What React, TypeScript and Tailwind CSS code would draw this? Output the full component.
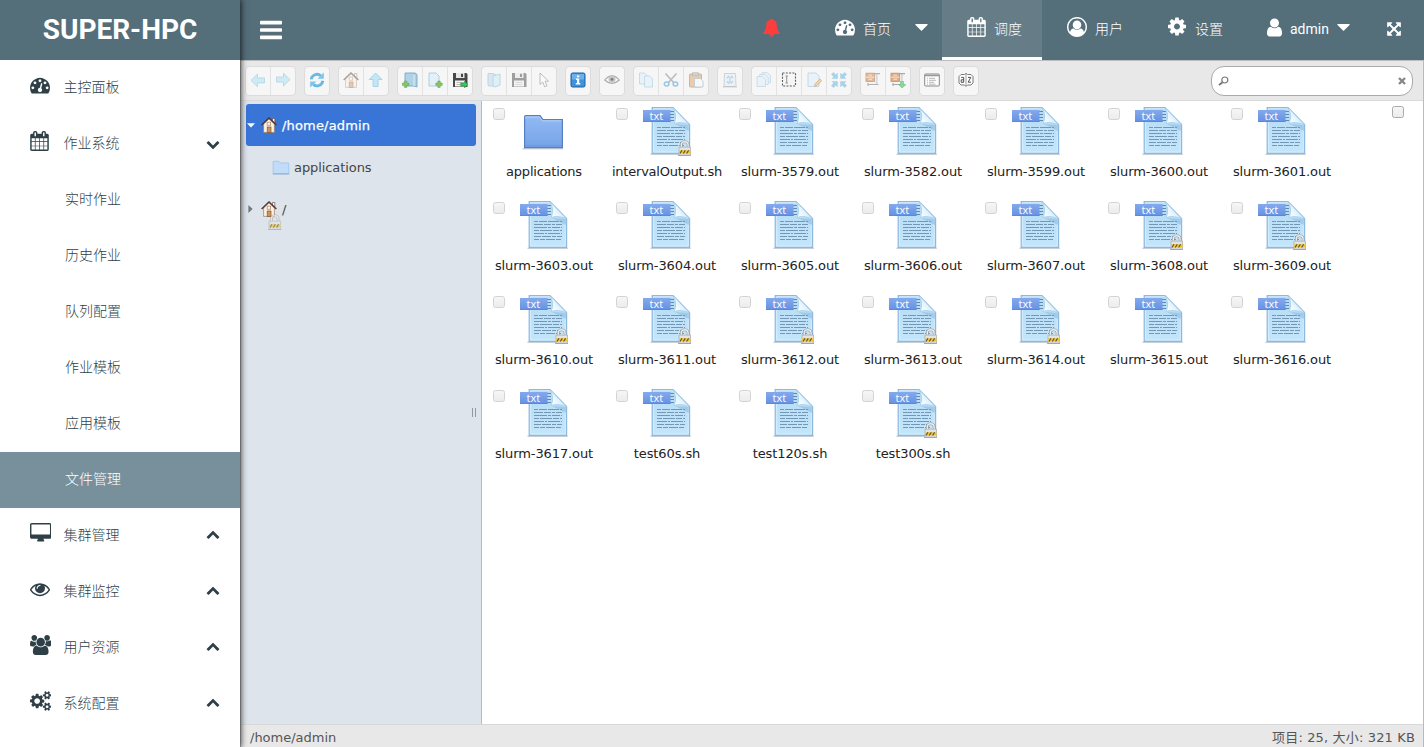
import React from "react";

const P = {
  dashboard:
    "M384 1152q0-53-37.5-90.5t-90.5-37.5-90.5 37.5-37.5 90.5 37.5 90.5 90.5 37.5 90.5-37.5 37.5-90.5zm192-448q0-53-37.5-90.5t-90.5-37.5-90.5 37.5-37.5 90.5 37.5 90.5 90.5 37.5 90.5-37.5 37.5-90.5zm428 481l101-382q6-26-7.5-48.5t-38.5-29.5-48 6.5-30 39.5l-101 382q-60 5-107 43.5t-63 98.5q-20 77 20 146t117 89 146-20 89-117q16-60-6-117t-72-91zm660-33q0-53-37.5-90.5t-90.5-37.5-90.5 37.5-37.5 90.5 37.5 90.5 90.5 37.5 90.5-37.5 37.5-90.5zm-640-640q0-53-37.5-90.5t-90.5-37.5-90.5 37.5-37.5 90.5 37.5 90.5 90.5 37.5 90.5-37.5 37.5-90.5zm448 192q0-53-37.5-90.5t-90.5-37.5-90.5 37.5-37.5 90.5 37.5 90.5 90.5 37.5 90.5-37.5 37.5-90.5zm320 448q0 261-141 483-19 29-54 29h-1402q-35 0-54-29-141-221-141-483 0-182 71-348t191-286 286-191 348-71 348 71 286 191 191 286 71 348z",
  bars: "M1664 1344v128q0 26-19 45t-45 19h-1408q-26 0-45-19t-19-45v-128q0-26 19-45t45-19h1408q26 0 45 19t19 45zm0-512v128q0 26-19 45t-45 19h-1408q-26 0-45-19t-19-45v-128q0-26 19-45t45-19h1408q26 0 45 19t19 45zm0-512v128q0 26-19 45t-45 19h-1408q-26 0-45-19t-19-45v-128q0-26 19-45t45-19h1408q26 0 45 19t19 45z",
  calendar:
    "M192 1664h288v-288h-288v288zm352 0h320v-288h-320v288zm-352-352h288v-320h-288v320zm352 0h320v-320h-320v320zm-352-384h288v-288h-288v288zm736 736h320v-288h-320v288zm-384-736h320v-288h-320v288zm768 736h288v-288h-288v288zm-384-352h320v-320h-320v320zm-352-864v-288q0-13-9.5-22.5t-22.5-9.5h-64q-13 0-22.5 9.5t-9.5 22.5v288q0 13 9.5 22.5t22.5 9.5h64q13 0 22.5-9.5t9.5-22.5zm736 864h288v-320h-288v320zm-384-384h320v-288h-320v288zm384 0h288v-288h-288v288zm32-480v-288q0-13-9.5-22.5t-22.5-9.5h-64q-13 0-22.5 9.5t-9.5 22.5v288q0 13 9.5 22.5t22.5 9.5h64q13 0 22.5-9.5t9.5-22.5zm384-64v1280q0 52-38 90t-90 38h-1408q-52 0-90-38t-38-90v-1280q0-52 38-90t90-38h128v-96q0-66 47-113t113-47h64q66 0 113 47t47 113v96h384v-96q0-66 47-113t113-47h64q66 0 113 47t47 113v96h128q52 0 90 38t38 90z",
  desktop:
    "M1792 992v-832q0-13-9.5-22.5t-22.5-9.5h-1600q-13 0-22.5 9.5t-9.5 22.5v832q0 13 9.5 22.5t22.5 9.5h1600q13 0 22.5-9.5t9.5-22.5zm128-832v1088q0 66-47 113t-113 47h-544q0 37 16 77.5t32 71 16 43.5q0 26-19 45t-45 19h-512q-26 0-45-19t-19-45q0-14 16-44t32-70 16-78h-544q-66 0-113-47t-47-113v-1088q0-66 47-113t113-47h1600q66 0 113 47t47 113z",
  eye: "M1664 960q-152-236-381-353 61 104 61 225 0 185-131.5 316.5t-316.5 131.5-316.5-131.5-131.5-316.5q0-121 61-225-229 117-381 353 133 205 333.5 326.5t434.5 121.5 434.5-121.5 333.5-326.5zm-720-384q0-20-14-34t-34-14q-125 0-214.5 89.5t-89.5 214.5q0 20 14 34t34 14 34-14 14-34q0-86 61-147t147-61q20 0 34-14t14-34zm848 384q0 34-20 69-140 230-376.5 368.5t-499.5 138.5-499.5-139-376.5-368q-20-35-20-69t20-69q140-229 376.5-368t499.5-139 499.5 139 376.5 368q20 35 20 69z",
  users:
    "M593 896q-162 5-265 128h-134q-82 0-138-40.5t-56-118.5q0-353 124-353 6 0 43.5 21t97.5 42.5 119 21.5q67 0 133-23-5 37-5 66 0 159 93 293zm1071 637q0 120-73 189.5t-194 69.5h-874q-121 0-194-69.5t-73-189.5q0-53 3.5-103.5t14-109 26.5-108.5 43-97.5 62-81 85.5-53.5 111.5-20q10 0 43 21.5t73 48 107 48 135 21.5 135-21.5 107-48 73-48 43-21.5q61 0 111.5 20t85.5 53.5 62 81 43 97.5 26.5 108.5 14 109 3.5 103.5zm-1024-1277q0 106-75 181t-181 75-181-75-75-181 75-181 181-75 181 75 75 181zm704 384q0 159-112.5 271.5t-271.5 112.5-271.5-112.5-112.5-271.5 112.5-271.5 271.5-112.5 271.5 112.5 112.5 271.5zm576 225q0 78-56 118.5t-138 40.5h-134q-103-123-265-128 93-134 93-293 0-29-5-66 66 23 133 23 59 0 119-21.5t97.5-42.5 43.5-21q124 0 124 353zm-128-609q0 106-75 181t-181 75-181-75-75-181 75-181 181-75 181 75 75 181z",
  cogs: "M896 896q0-106-75-181t-181-75-181 75-75 181 75 181 181 75 181-75 75-181zm768 512q0-52-38-90t-90-38-90 38-38 90q0 53 37.5 90.5t90.5 37.5 90.5-37.5 37.5-90.5zm0-1024q0-52-38-90t-90-38-90 38-38 90q0 53 37.5 90.5t90.5 37.5 90.5-37.5 37.5-90.5zm-384 421v185q0 10-7 19.5t-16 10.5l-155 24q-11 35-32 76 34 48 90 115 7 10 7 20 0 12-7 19-23 30-82.5 89.5t-78.5 59.5q-11 0-21-7l-115-90q-37 19-77 31-11 108-23 155-7 24-30 24h-186q-11 0-20-7.5t-10-17.5l-23-153q-34-10-75-31l-118 89q-7 7-20 7-11 0-21-8-144-133-144-160 0-9 7-19 10-14 41-53t47-61q-23-44-35-82l-152-24q-10-1-17-9.5t-7-19.5v-185q0-10 7-19.5t16-10.5l155-24q11-35 32-76-34-48-90-115-7-11-7-20 0-12 7-20 22-30 82-89t79-59q11 0 21 7l115 90q34-18 77-32 11-108 23-154 7-24 30-24h186q11 0 20 7.5t10 17.5l23 153q34 10 75 31l118-89q8-7 20-7 11 0 21 8 144 133 144 160 0 9-7 19-12 16-42 54t-45 60q23 48 34 82l152 23q10 2 17 10.5t7 19.5zm640 533v140q0 16-149 31-12 27-30 52 51 113 51 138 0 4-4 7-122 71-124 71-8 0-46-47t-52-68q-20 2-30 2t-30-2q-14 21-52 68t-46 47q-2 0-124-71-4-3-4-7 0-25 51-138-18-25-30-52-149-15-149-31v-140q0-16 149-31 13-29 30-52-51-113-51-138 0-4 4-7 4-2 35-20t59-34 30-16q8 0 46 46.5t52 67.5q20-2 30-2t30 2q51-71 92-112l6-2q4 0 124 70 4 3 4 7 0 25-51 138 17 23 30 52 149 15 149 31zm0-1024v140q0 16-149 31-12 27-30 52 51 113 51 138 0 4-4 7-122 71-124 71-8 0-46-47t-52-68q-20 2-30 2t-30-2q-14 21-52 68t-46 47q-2 0-124-71-4-3-4-7 0-25 51-138-18-25-30-52-149-15-149-31v-140q0-16 149-31 13-29 30-52-51-113-51-138 0-4 4-7 4-2 35-20t59-34 30-16q8 0 46 46.5t52 67.5q20-2 30-2t30 2q51-71 92-112l6-2q4 0 124 70 4 3 4 7 0 25-51 138 17 23 30 52 149 15 149 31z",
  bell: "M912 1696q0-16-16-16-59 0-101.5-42.5t-42.5-101.5q0-16-16-16t-16 16q0 73 51.5 124.5t124.5 51.5q16 0 16-16zm816-288q0 52-38 90t-90 38h-448q0 106-75 181t-181 75-181-75-75-181h-448q-52 0-90-38t-38-90q50-42 91-88t85-119.5 74.5-158.5 50-206 19.5-260q0-152 117-282.5t307-158.5q-8-19-8-39 0-40 28-68t68-28 68 28 28 68q0 20-8 39 190 28 307 158.5t117 282.5q0 139 19.5 260t50 206 74.5 158.5 85 119.5 91 88z",
  cog: "M1152 896q0-106-75-181t-181-75-181 75-75 181 75 181 181 75 181-75 75-181zm512-109v222q0 12-8 23t-20 13l-185 28q-19 54-39 91 35 50 107 138 10 12 10 25t-9 23q-27 37-99 108t-94 71q-12 0-26-9l-138-108q-44 23-91 38-16 136-29 186-7 28-36 28h-222q-14 0-24.5-8.5t-11.5-21.5l-28-184q-49-16-90-37l-141 107q-10 9-25 9-14 0-25-11-126-114-165-168-7-10-7-23 0-12 8-23 15-21 51-66.5t54-70.5q-27-50-41-99l-183-27q-13-2-21-12.5t-8-23.5v-222q0-12 8-23t19-13l186-28q14-46 39-92-40-57-107-138-10-12-10-24 0-10 9-23 26-36 98.5-107.5t94.5-71.5q13 0 26 10l138 107q44-23 91-38 16-136 29-186 7-28 36-28h222q14 0 24.5 8.5t11.5 21.5l28 184q49 16 90 37l142-107q9-9 24-9 13 0 25 10 129 119 165 170 7 8 7 22 0 12-8 23-15 21-51 66.5t-54 70.5q26 50 41 98l183 28q13 2 21 12.5t8 23.5z",
  user: "M1536 1399q0 109-62.5 187t-150.5 78h-854q-88 0-150.5-78t-62.5-187q0-85 8.5-160.5t31.5-152 58.5-131 94-89 134.5-34.5q131 128 313 128t313-128q76 0 134.5 34.5t94 89 58.5 131 31.5 152 8.5 160.5zm-256-887q0 159-112.5 271.5t-271.5 112.5-271.5-112.5-112.5-271.5 112.5-271.5 271.5-112.5 271.5 112.5 112.5 271.5z",
  userCircle:
    "M896 0q182 0 348 71t286 191 191 286 71 348q0 181-70.5 347t-190.5 286-286 191.5-349 71.5-349-71-285.5-191.5-190.5-286-71-347.5 71-348 191-286 286-191 348-71zm619 1351q149-205 149-455 0-156-61-298t-164-245-245-164-298-61-298 61-245 164-164 245-61 298q0 250 149 455 66-327 306-327 131 128 313 128t313-128q240 0 306 327zm-235-647q0-159-112.5-271.5t-271.5-112.5-271.5 112.5-112.5 271.5 112.5 271.5 271.5 112.5 271.5-112.5 112.5-271.5z",
  expand:
    "M1411 541l-355 355 355 355 144-144q29-31 70-14 39 17 39 59v448q0 26-19 45t-45 19h-448q-42 0-59-40-17-39 14-69l144-144-355-355-355 355 144 144q31 30 14 69-17 40-59 40h-448q-26 0-45-19t-19-45v-448q0-42 40-59 39-17 69 14l144 144 355-355-355-355-144 144q-19 19-45 19-12 0-24-5-40-17-40-59v-448q0-26 19-45t45-19h448q42 0 59 40 17 39-14 69l-144 144 355 355 355-355-144-144q-31-30-14-69 17-40 59-40h448q26 0 45 19t19 45v448q0 42-39 59-13 5-25 5-26 0-45-19z",
  down: "M1683 808l-742 741q-19 19-45 19t-45-19l-742-741q-19-19-19-45.5t19-45.5l166-165q19-19 45-19t45 19l531 531 531-531q19-19 45-19t45 19l166 165q19 19 19 45.5t-19 45.5z",
  up: "M1683 1331l-166 165q-19 19-45 19t-45-19l-531-531-531 531q-19 19-45 19t-45-19l-166-165q-19-19-19-45.5t19-45.5l742-741q19-19 45-19t45 19l742 741q19 19 19 45.5t-19 45.5z",
};

function Glyph({ d, box = "0 0 1792 1792", className = "" }: { d: string; box?: string; className?: string }) {
  return (
    <svg viewBox={box} className={`shrink-0 fill-current ${className}`}>
      <path d={d} />
    </svg>
  );
}

const Caret = ({ className = "" }: { className?: string }) => (
  <svg viewBox="0 0 13 7" className={`h-[7px] w-[13px] shrink-0 fill-white ${className}`}>
    <path d="M0.6 0H12.4Q13 .5 12.5 1L7 6.6Q6.5 7 6 6.6L.5 1Q0 .5 .6 0Z" />
  </svg>
);

/* ---------- sidebar ---------- */

function MenuRow({ label, d, box, size, chevron }: { label: string; d: string; box?: string; size: string; chevron?: "up" | "down" }) {
  return (
    <div className="flex h-14 items-center pl-[30px] pr-[20px]">
      <div className="flex w-[33.5px] shrink-0">
        <Glyph d={d} box={box} className={`-mt-[7px] ${size}`} />
      </div>
      <span className="-mt-[3px] grow">{label}</span>
      {chevron === "down" && <Glyph d={P.down} className="size-[14px]" />}
      {chevron === "up" && <Glyph d={P.up} className="-mt-[5px] size-[14px]" />}
    </div>
  );
}

const SUBS = ["实时作业", "历史作业", "队列配置", "作业模板", "应用模板", "文件管理"];

function Sidebar() {
  return (
    <aside className="relative z-10 flex w-[240px] shrink-0 flex-col bg-white text-[14px] font-light text-[#2f3f47] shadow-[0_0_6px_1px_rgba(0,0,0,0.75)]">
      <div className="flex h-[60px] shrink-0 items-center justify-center bg-[#546e7a] font-[Roboto] text-[28px] font-bold text-white">
        SUPER-HPC
      </div>
      <MenuRow label="主控面板" d={P.dashboard} size="size-[20px]" />
      <MenuRow label="作业系统" d={P.calendar} box="64 0 1664 1792" size="h-[20px] w-[19px]" chevron="down" />
      {SUBS.map((s) => (
        <div
          key={s}
          className={`flex h-14 items-center pl-[65px] ${s === "文件管理" ? "bg-[#78909c] text-white" : ""}`}
        >
          <span className="-mt-[3px]">{s}</span>
        </div>
      ))}
      <MenuRow label="集群管理" d={P.desktop} box="0 0 1920 1792" size="h-[20px] w-[21.4px]" chevron="up" />
      <MenuRow label="集群监控" d={P.eye} size="size-[20px]" chevron="up" />
      <MenuRow label="用户资源" d={P.users} box="0 0 1920 1792" size="h-[20px] w-[21.4px]" chevron="up" />
      <MenuRow label="系统配置" d={P.cogs} box="0 0 1920 1792" size="h-[20px] w-[21.4px]" chevron="up" />
    </aside>
  );
}

/* ---------- header ---------- */

function Header() {
  return (
    <header className="flex h-[60px] shrink-0 items-center bg-[#546e7a] pl-[20px] text-[14px] text-white">
      <Glyph d={P.bars} box="128 0 1536 1792" className="h-[26px] w-[22px]" />
      <div className="grow" />
      <Glyph d={P.bell} box="64 0 1664 1792" className="mr-[55px] -mt-[5px] h-[19px] w-[17px] text-[#ff3d3d]" />
      <div className="flex w-[107px] items-center">
        <Glyph d={P.dashboard} className="mr-[8px] -mt-[6px] size-[20px]" />
        <span className="-mt-[4px] w-[52px] font-light">首页</span>
        <Caret className="-mt-[5px]" />
      </div>
      <div className="flex h-full w-[100px] items-center border-b-[3px] border-white bg-[#667d88] pl-[25px]">
        <Glyph d={P.calendar} box="64 0 1664 1792" className="mr-[8px] -mt-[3px] h-[20px] w-[19px]" />
        <span className="-mt-px font-light">调度</span>
      </div>
      <div className="flex w-[126px] items-center pl-[25px]">
        <Glyph d={P.userCircle} className="mr-[8px] -mt-[7px] size-[20px]" />
        <span className="-mt-[4px] font-light">用户</span>
      </div>
      <div className="flex w-[99px] items-center">
        <Glyph d={P.cog} box="128 0 1536 1792" className="mr-[9px] -mt-[7px] h-[21px] w-[18px]" />
        <span className="-mt-[4px] font-light">设置</span>
      </div>
      <div className="flex w-[120px] items-center">
        <Glyph d={P.user} box="256 0 1280 1792" className="mr-[8px] -mt-[6px] h-[21px] w-[15px]" />
        <span className="-mt-[2px] w-[47px] font-[Roboto]">admin</span>
        <Caret className="-mt-[5px]" />
      </div>
      <Glyph d={P.expand} box="128 0 1536 1792" className="mr-[23px] -mt-[2px] h-[16px] w-[14px]" />
    </header>
  );
}

/* ---------- toolbar icons (16 x 16) ---------- */

const Plus = ({ x, y, c = "#7cc05a" }: { x: number; y: number; c?: string }) => (
  <path d={`M${x + 2} ${y}h2.4v2h2v2.4h-2v2h-2.4v-2h-2v-2.4h2z`} fill={c} stroke="#4f9a35" strokeWidth=".5" />
);
const Arrow = ({ r }: { r: number }) => (
  <path transform={`rotate(${r} 8 8)`} d="M1 8.4L7.5 2V5.9H14.5V10.9H7.5V14.8Z" fill="#c3e6f5" stroke="#9bcfe6" strokeWidth=".9" />
);
const Page = ({ x = 3, y = 1, w = 10, h = 13 }: { x?: number; y?: number; w?: number; h?: number }) => (
  <path d={`M${x} ${y}h${w - 3}l3 3v${h - 3}h-${w}z`} fill="#e2f0fa" stroke="#a0c6de" strokeWidth=".9" />
);
const Floppy = () => (
  <g>
    <path d="M1 1H14.5L15.5 2.5V15H1Z" fill="#484848" />
    <rect x="4" y="1" width="8.5" height="5" fill="#e6e6e6" />
    <rect x="9" y="1.8" width="2" height="3.2" fill="#444" />
    <rect x="3" y="8.5" width="10" height="6" fill="#f4f4f4" />
    <path d="M4.5 10.5H11.5M4.5 12.5H11.5" stroke="#bbb" />
  </g>
);
const House = () => (
  <g>
    <path d="M11.5 1.5h2.3v4.5l-2.3-2z" fill="#fff" stroke="#70555a" strokeWidth=".7" />
    <path d="M2.6 7L8 2L13.4 7V15.4H2.6Z" fill="#fdf1e2" stroke="#a07a60" strokeWidth=".7" />
    <path d="M.6 8L8 .9L15.4 8" fill="none" stroke="#4d3434" strokeWidth="1.3" />
    <rect x="6.2" y="5.2" width="3.4" height="3" fill="#fff" stroke="#b58c69" strokeWidth=".8" />
    <rect x="6.2" y="10" width="3.8" height="5.4" fill="#c99763" stroke="#805431" strokeWidth=".7" />
  </g>
);
const Cabinet = () => (
  <g>
    <rect x="1" y="1.2" width="8.5" height="8.2" fill="#d6935c" stroke="#a76436" strokeWidth=".8" />
    <path d="M1 5.2H9.5M3.5 3.2H7M3.5 7.3H7" stroke="#f6dcc0" strokeWidth="1" />
    <path d="M10 1.7H15M3 12.5H13.5M3 11V14" stroke="#888" strokeWidth="1.2" />
    <path d="M11.7 2.5V12" stroke="#999" strokeWidth="2" strokeDasharray="1 1" />
  </g>
);
const Corners = () => (
  <g fill="#8fc9e8" stroke="#72b4d8" strokeWidth=".4">
    {[0, 90, 180, 270].map((r) => (
      <path key={r} transform={`rotate(${r} 8 8)`} d="M6.4 6.4V1.2L4.8 2.8L2.4 .4L.4 2.4L2.8 4.8L1.2 6.4Z" />
    ))}
  </g>
);

const ICONS: Record<string, [React.ReactNode, string]> = {
  back: [<Arrow r={0} />, "opacity-75"],
  forward: [<Arrow r={180} />, "opacity-75"],
  reload: [
    <g fill="none" stroke="#5cb3e0" strokeWidth="2.8">
      <path d="M2.2 7.4A5.8 5.8 0 0 1 11.8 3.8" />
      <path d="M13.8 8.8A5.8 5.8 0 0 1 4.2 12.4" />
      <path d="M8.6 6.8H14.8V.6Z" fill="#72c0e8" stroke="none" />
      <path d="M7.4 9.4H1.2V15.6Z" fill="#72c0e8" stroke="none" />
    </g>,
    "opacity-90",
  ],
  home: [<House />, "opacity-45"],
  parent: [<Arrow r={90} />, "opacity-95"],
  mkdir: [
    <g>
      <path d="M3 1H13L15 2.5V15L12 14H3Z" fill="#a9cfe6" stroke="#6e9fbd" strokeWidth=".9" />
      <path d="M12 3V14" stroke="#d5edfa" />
      <Plus x={0.4} y={9} />
    </g>,
    "opacity-90",
  ],
  mkfile: [<g><Page x={2} /><Plus x={8.8} y={9} /></g>, "opacity-90"],
  upload: [<g><Floppy /><path d="M8.8 12.5L12 9.2V11H15.8V14H12V15.8Z" transform="rotate(180 12.3 12.5)" fill="#2fcf5c" stroke="#17923b" strokeWidth=".6" /></g>, ""],
  open: [<g><path d="M2 1.5H7L10 3V14H3L2 13Z" fill="#c0dff0" stroke="#8fbdd8" strokeWidth=".9" /><path d="M7 14V4L14 2V13L9 15Z" fill="#d3e9f5" stroke="#8fbdd8" strokeWidth=".9" /></g>, "opacity-60"],
  save: [<Floppy />, "opacity-50"],
  cursor: [<path d="M4 1V12.5L6.7 10L8.7 14.8L11 13.8L9 9.2H12.6Z" fill="#fff" stroke="#777" strokeWidth=".9" />, "opacity-50"],
  info: [
    <g>
      <rect x="1" y="1" width="14" height="14" rx="1.5" fill="#3f93dc" stroke="#235f9c" />
      <rect x="2" y="2" width="12" height="5.5" fill="#6bb2ec" />
      <path d="M7 3.5H9.2V5.3H7ZM6 6.5H9.2V11H10.3V12.4H5.8V11H7V8H6Z" fill="#fff" />
    </g>,
    "",
  ],
  preview: [
    <g>
      <path d="M.7 8Q8-.2 15.3 8Q8 14.8 .7 8Z" fill="#fafafa" stroke="#777" strokeWidth="1.1" />
      <circle cx="8" cy="7.3" r="3.5" fill="#aaa" />
      <circle cx="8" cy="7.3" r="1.5" fill="#333" />
    </g>,
    "opacity-60",
  ],
  copy: [<g><Page x={1.5} y={1} w={8} h={11} /><Page x={6.5} y={4} w={8} h={11} /></g>, "opacity-60"],
  cut: [
    <g fill="none">
      <path d="M2.5 1.5L11 11M13.5 1.5L5 11" stroke="#999" strokeWidth="1.7" />
      <ellipse cx="3.6" cy="12" rx="2.3" ry="2" stroke="#5aa9dc" strokeWidth="1.5" />
      <ellipse cx="12.4" cy="12" rx="2.3" ry="2" stroke="#5aa9dc" strokeWidth="1.5" />
    </g>,
    "opacity-60",
  ],
  paste: [
    <g>
      <rect x="1.5" y="2" width="12" height="13" rx="1" fill="#e2b183" stroke="#b67e4e" strokeWidth=".9" />
      <rect x="4.5" y=".8" width="6" height="3" fill="#bbb" stroke="#888" strokeWidth=".6" />
      <path d="M6.5 6.5H12.5L15 9V15H6.5Z" fill="#f6f9fb" stroke="#99a8b2" strokeWidth=".8" />
    </g>,
    "opacity-60",
  ],
  empty: [
    <g>
      <path d="M2.5 1.5H13.5L14 14.5H2Z" fill="#e2edf5" stroke="#8ea4b2" strokeWidth=".9" />
      <path d="M5 6L7 4M9 4L11 6M11 9L9 11.5M7 11.5L5 9.5M7 8H9M8 5V7M8 9V11" stroke="#5f9bd0" strokeWidth="1.2" />
      <path d="M1 14.8H15" stroke="#888" />
    </g>,
    "opacity-45",
  ],
  duplicate: [<g><Page x={6} y={.7} w={8.5} h={10} /><Page x={3.7} y={2.5} w={8.5} h={10} /><Page x={1} y={4.5} w={8.5} h={10} /></g>, "opacity-55"],
  rename: [
    <g fill="none" stroke="#444" strokeWidth="1.1">
      <rect x="1.5" y="1" width="13" height="13" strokeDasharray="2 1.3" />
      <path d="M4.5 4H7M5.7 4V11M4.5 11H7" stroke="#777" strokeWidth=".9" />
    </g>,
    "opacity-85",
  ],
  edit: [<g><Page x={2} w={11} h={13.5} /><path d="M8.5 14.5L9 12L14 7L15.7 8.7L10.8 13.7Z" fill="#f0c46c" stroke="#b98b56" strokeWidth=".7" /></g>, "opacity-65"],
  resize: [<Corners />, "opacity-75"],
  extract: [<Cabinet />, "opacity-60"],
  archive: [<g><Cabinet /><path d="M9.5 12.5V9.5H12.5V12.5H15L11 16L7.5 12.5Z" fill="#53cf72" stroke="#2e9c4d" strokeWidth=".5" transform="translate(1 0)" /></g>, "opacity-70"],
  view: [
    <g>
      <rect x=".7" y="2" width="14.6" height="12" rx=".8" fill="#fff" stroke="#777" />
      <path d="M1 3.5H15" stroke="#888" strokeWidth="1.5" />
      <path d="M3 6.3H4M5 6.3H11M3 8.3H4M5 8.3H12M3 10.3H4M5 10.3H10M3 12.2H4M5 12.2H11.5" stroke="#999" strokeWidth=".8" />
    </g>,
    "opacity-85",
  ],
  sort: [
    <g>
      <path d="M3 2.5H6.5L8 1.3L9.5 2.5H13L15 4.5V11L13 13H9.5L8 14.5L6.5 13H3L1 11V4.5Z" fill="#fff" stroke="#555" strokeWidth=".9" />
      <path d="M8 2V14" stroke="#777" strokeWidth=".8" />
      <path d="M3.2 5.4H5.7V10.3H3.2V7.8H5.7M10 5.4H12.8L10.2 10.2H13" fill="none" stroke="#333" strokeWidth="1" />
    </g>,
    "opacity-85",
  ],
};

const GROUPS = [
  ["back", "forward"],
  ["reload"],
  ["home", "parent"],
  ["mkdir", "mkfile", "upload"],
  ["open", "save", "cursor"],
  ["info"],
  ["preview"],
  ["copy", "cut", "paste"],
  ["empty"],
  ["duplicate", "rename", "edit", "resize"],
  ["extract", "archive"],
  ["view"],
  ["sort"],
];

function Toolbar() {
  return (
    <div className="flex h-[41px] shrink-0 items-center gap-[8px] border-y border-t-[#bdbdbd] border-b-[#dadada] bg-[#e8e8e8] pl-[4px] pr-[10px]">
      {GROUPS.map((g) => (
        <div key={g[0]} className="flex h-[30px] divide-x divide-[#e2e2e2] rounded-[4px] border border-[#dcdcdc] bg-[#f6f6f6]">
          {g.map((id) => (
            <span key={id} className="flex w-[25px] items-start justify-center pt-[5px] last:w-[24px]">
              <svg viewBox="0 0 16 16" className={`size-[16px] ${ICONS[id][1]}`}>
                {ICONS[id][0]}
              </svg>
            </span>
          ))}
        </div>
      ))}
      <div className="ml-auto flex h-[30px] w-[202px] items-center justify-between rounded-[13px] border border-[#aaa] bg-white pl-[6px] pr-[6px]">
        <svg viewBox="0 0 11 10" className="h-[10px] w-[11px]" fill="none" stroke="#777">
          <circle cx="6.8" cy="4" r="3" strokeWidth="1.2" />
          <path d="M4.6 6.2L1 9" strokeWidth="1.9" />
        </svg>
        <svg viewBox="0 0 8 8" className="mt-px size-[8px]" stroke="#888" strokeWidth="2.4">
          <path d="M1 1L7 7M7 1L1 7" />
        </svg>
      </div>
    </div>
  );
}

/* ---------- file browser ---------- */

const LockShape = () => (
  <g>
    <path d="M3.3 7V4.5Q3.3 1.2 6.7 1.2Q10.1 1.2 10.1 4.5V7" fill="none" stroke="#999" strokeWidth="2.6" />
    <path d="M3.3 7V4.5Q3.3 1.2 6.7 1.2Q10.1 1.2 10.1 4.5V7" fill="none" stroke="#ececec" strokeWidth="1.4" />
    <rect x="1" y="6.6" width="11.6" height="8" fill="#e3e3e3" stroke="#aaa" strokeWidth=".7" />
    <rect x="1.2" y="9.8" width="11.2" height="3.2" fill="#f8c51f" />
    <path d="M2 13L4 9.8M5.3 13L7.3 9.8M8.6 13L10.6 9.8" stroke="#555" strokeWidth="1.2" />
    <path d="M0 15H13.5" stroke="#999" strokeWidth=".8" />
  </g>
);

const Defs = () => (
  <svg className="absolute size-0">
    <defs>
      <linearGradient id="page" x1="0" y1="0" x2="0" y2="1">
        <stop offset="0" stopColor="#b4dbf5" />
        <stop offset="1" stopColor="#c4e6fb" />
      </linearGradient>
      <linearGradient id="fold" x1="0" y1=".8" x2=".8" y2="0.2">
        <stop offset="0" stopColor="#ffffff" />
        <stop offset=".5" stopColor="#e3f3fd" />
        <stop offset="1" stopColor="#a2d0ee" />
      </linearGradient>
      <linearGradient id="tag" x1="0" y1="0" x2="0" y2="1">
        <stop offset="0" stopColor="#84a9ee" />
        <stop offset="1" stopColor="#6691e2" />
      </linearGradient>
      <linearGradient id="folder" x1="0" y1="0" x2="0" y2="1">
        <stop offset="0" stopColor="#92bbf3" />
        <stop offset="1" stopColor="#76a2e8" />
      </linearGradient>
    </defs>
  </svg>
);

function TxtIcon({ locked }: { locked?: boolean }) {
  return (
    <svg viewBox="0 0 48 50" className="h-[50px] w-[48px]">
      <path d="M7.5 48.2H47.8" stroke="#8b9fae" strokeWidth="1" opacity=".7" />
      <path d="M9.2 1.5H30L46.6 18.5V47.4H9.2Z" fill="url(#page)" stroke="#8db8e0" strokeWidth="1.2" />
      <path d="M10.6 2.8H29.5L45.2 19V46H10.6Z" fill="none" stroke="#d8effd" strokeWidth=".8" />
      <path d="M32 18L46 25V19Z" fill="#7fb0d8" opacity=".45" />
      <path d="M27 5.5H31M27 8.5H31M27 11.5H31M27 14.5H31" stroke="#6089ad" strokeWidth="1.1" />
      <path d="M30 1.5Q34.5 9 31.3 17.5Q37 15 46.6 18.8Z" fill="url(#fold)" stroke="#9cc7e6" strokeWidth=".7" />
      <g stroke="#7497b5" strokeWidth="1">
        <path d="M14 21.5H42" strokeDasharray="4 1 8 1 11 1" />
        <path d="M14 24.5H42" strokeDasharray="9 1 7 1 3 1" />
        <path d="M14 27.5H42" strokeDasharray="13 1 3 1 8 1" />
        <path d="M14 30.5H42" strokeDasharray="5 1 12 1 6 1" />
        <path d="M14 33.5H42" strokeDasharray="10 1 2 1 12 1" />
        <path d="M14 36.5H42" strokeDasharray="7 1 9 1 4 1" />
        <path d="M14 39.5H42" strokeDasharray="5 1 5 1 9 1" />
      </g>
      <rect x="0" y="4" width="27.5" height="12" fill="url(#tag)" />
      <path d="M0 15.5H27.5" stroke="#5e87d4" />
      <text x="13.3" y="13.6" textAnchor="middle" fill="#fff" fontSize="11" fontFamily="'Open Sans', sans-serif">
        txt
      </text>
      {locked && (
        <g transform="translate(35 34.5)">
          <LockShape />
        </g>
      )}
    </svg>
  );
}

function FolderIcon() {
  return (
    <svg viewBox="0 0 48 50" className="h-[50px] w-[48px]">
      <path d="M2.5 42.8H43" stroke="#8f8f8f" strokeWidth="1" opacity=".55" />
      <path d="M4.6 11Q4.6 9.6 6 9.6H20L23 13.6H42.4V41.6H4.6Z" fill="url(#folder)" stroke="#5480c0" strokeWidth="1.2" />
      <path d="M5.8 12.5V11H19.5L22.4 14.8H41.4" fill="none" stroke="#b5d3fa" strokeWidth="1" />
      <path d="M5.5 39.8H41.8" stroke="#648fd6" strokeWidth=".8" />
    </svg>
  );
}

const CheckBox = ({ className = "" }: { className?: string }) => (
  <span className={`size-[12px] rounded-[2.5px] border bg-gradient-to-b from-[#f6f6f6] to-[#ececec] ${className}`} />
);

type Entry = { name: string; locked?: boolean; folder?: boolean };

const FILES: Entry[] = [
  { name: "applications", folder: true },
  { name: "intervalOutput.sh", locked: true },
  ...[3579, 3582, 3599, 3600, 3601, 3603, 3604, 3605, 3606, 3607, 3608, 3609, 3610, 3611, 3612, 3613, 3614, 3615, 3616, 3617].map(
    (n) => ({ name: `slurm-${n}.out`, locked: n >= 3608 && n <= 3614 })
  ),
  { name: "test60s.sh" },
  { name: "test120s.sh" },
  { name: "test300s.sh", locked: true },
];

function FileCell({ f }: { f: Entry }) {
  return (
    <div className="relative flex h-[94px] w-[123px] flex-col items-center pt-[5px]">
      <CheckBox className="absolute left-[11px] top-[7px] border-[#d3d3d3]" />
      {f.folder ? <FolderIcon /> : <TxtIcon locked={f.locked} />}
      <span
        className={`mt-[7px] ml-px whitespace-nowrap leading-[18px] text-[#222] ${
          f.name.startsWith("slurm") || f.name.startsWith("test") ? "tracking-[-0.1px]" : "tracking-[-0.22px]"
        }`}
      >
        {f.name}
      </span>
    </div>
  );
}

function Tree() {
  return (
    <nav className="relative flex w-[241px] shrink-0 flex-col border-r border-[#bbb] bg-[#dde4eb] pl-[5px] pr-[5px] pt-[3px] text-[#444]">
      <div className="flex h-[42px] items-center rounded-[3px] bg-[#3875d7] text-white">
        <svg viewBox="0 0 8 5" className="ml-px h-[5px] w-[8px] fill-white">
          <path d="M0 .3H8L4 4.6Z" />
        </svg>
        <svg viewBox="0 0 16 16" className="ml-[6px] mr-[5px] size-[16px]">
          <House />
        </svg>
        <span className="mt-[2px] tracking-[0.17px] [-webkit-text-stroke:0.25px_white]">/home/admin</span>
      </div>
      <div className="flex h-[42px] items-center pl-[26px]">
        <svg viewBox="0 0 17 15" className="mr-[4px] h-[15px] w-[18px]">
          <path d="M.7 1.3H6.5L8 3H16.3V13.6H.7Z" fill="#c0dcf8" stroke="#a4c9ef" />
          <path d="M.3 14H16.7" stroke="#8aaccd" />
        </svg>
        <span className="mt-[2px] tracking-[-0.08px]">applications</span>
      </div>
      <div className="flex h-[42px] items-center">
        <svg viewBox="0 0 5 8" className="ml-[2px] h-[8px] w-[5px] fill-[#777]">
          <path d="M.4 0V8L4.6 4Z" />
        </svg>
        <svg viewBox="0 0 22 30" className="ml-[8px] mt-[14px] h-[30px] w-[22px]">
          <House />
          <g transform="translate(7 13.5)" opacity=".65">
            <LockShape />
          </g>
        </svg>
        <span className="-ml-px mt-[2px]">/</span>
      </div>
      <span className="absolute right-[5px] top-[307px] h-[9px] w-[4px] border-x border-[#999]" />
    </nav>
  );
}

export default function App() {
  return (
    <div className="flex h-[747px] w-[1424px] overflow-hidden bg-white font-['Noto_Sans_CJK_SC',sans-serif]">
      <Sidebar />
      <div className="flex min-w-0 grow flex-col">
        <Header />
        <main className="flex min-h-0 grow flex-col border-x border-[#bbb] font-['DejaVu_Sans','Noto_Sans_CJK_SC',sans-serif] text-[13px]">
          <Toolbar />
          <div className="flex min-h-0 grow">
            <Tree />
            <section className="relative grow bg-white">
              <Defs />
              <div className="flex w-[861px] flex-wrap">
                {FILES.map((f) => (
                  <FileCell key={f.name} f={f} />
                ))}
              </div>
              <CheckBox className="absolute right-[19px] top-[5px] border-[#aaa]" />
            </section>
          </div>
          <footer className="flex h-[23px] shrink-0 items-center justify-between border-t border-[#d8d8d8] bg-[#e8e8e8] pl-[9px] pr-[8px] pt-[3px] text-[#555]">
            <span>/home/admin</span>
            <span className="tracking-[0.15px]">项目: 25, 大小: 321 KB</span>
          </footer>
        </main>
      </div>
    </div>
  );
}
